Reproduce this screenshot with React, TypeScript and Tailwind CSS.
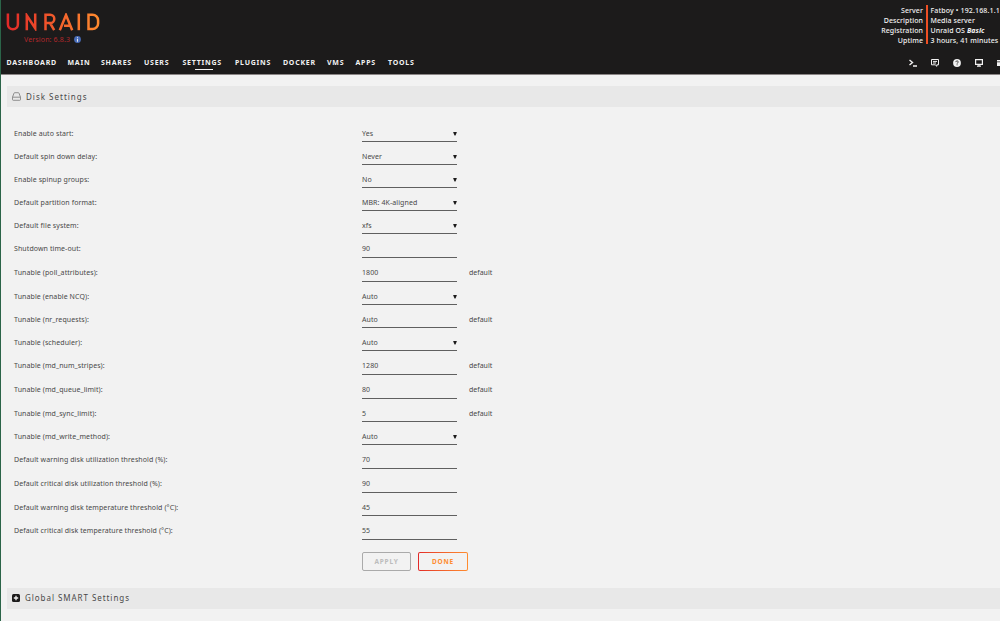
import clsx from "clsx";

interface Setting {
  label: string;
  value: string;
  type: "select" | "text";
  height: string;
  hint?: string;
}

const menu = [
  { name: "DASHBOARD", width: "w-[61px]" },
  { name: "MAIN", width: "w-[33.5px]" },
  { name: "SHARES", width: "w-[43px]" },
  { name: "USERS", width: "w-[38.5px]" },
  { name: "SETTINGS", width: "w-[52.5px]" },
  { name: "PLUGINS", width: "w-[48px]" },
  { name: "DOCKER", width: "w-[44px]" },
  { name: "VMS", width: "w-[28.5px]" },
  { name: "APPS", width: "w-[32.5px]" },
  { name: "TOOLS", width: "w-[30px]" },
];

const settings: Setting[] = [
  { label: "Enable auto start:", value: "Yes", type: "select", height: "h-[23px]" },
  { label: "Default spin down delay:", value: "Never", type: "select", height: "h-[23px]" },
  { label: "Enable spinup groups:", value: "No", type: "select", height: "h-[23px]" },
  { label: "Default partition format:", value: "MBR: 4K-aligned", type: "select", height: "h-[23px]" },
  { label: "Default file system:", value: "xfs", type: "select", height: "h-[23px]" },
  { label: "Shutdown time-out:", value: "90", type: "text", height: "h-[24px]" },
  { label: "Tunable (poll_attributes):", value: "1800", type: "text", height: "h-[24px]", hint: "default" },
  { label: "Tunable (enable NCQ):", value: "Auto", type: "select", height: "h-[23px]" },
  { label: "Tunable (nr_requests):", value: "Auto", type: "text", height: "h-[23px]", hint: "default" },
  { label: "Tunable (scheduler):", value: "Auto", type: "select", height: "h-[23px]" },
  { label: "Tunable (md_num_stripes):", value: "1280", type: "text", height: "h-[24px]", hint: "default" },
  { label: "Tunable (md_queue_limit):", value: "80", type: "text", height: "h-[24px]", hint: "default" },
  { label: "Tunable (md_sync_limit):", value: "5", type: "text", height: "h-[23px]", hint: "default" },
  { label: "Tunable (md_write_method):", value: "Auto", type: "select", height: "h-[23px]" },
  { label: "Default warning disk utilization threshold (%):", value: "70", type: "text", height: "h-[24px]" },
  { label: "Default critical disk utilization threshold (%):", value: "90", type: "text", height: "h-[24px]" },
  { label: "Default warning disk temperature threshold (°C):", value: "45", type: "text", height: "h-[23px]" },
  { label: "Default critical disk temperature threshold (°C):", value: "55", type: "text", height: "h-[24px]" },
];

function Logo() {
  return (
    <svg width="94" height="18" viewBox="0 0 94 18" fill="none" stroke="url(#brand)" strokeWidth="2.5">
      <defs>
        <linearGradient id="brand" gradientUnits="userSpaceOnUse" x1="0" y1="0" x2="94" y2="0">
          <stop offset="0" stopColor="#e22828" />
          <stop offset="1" stopColor="#ff8c2f" />
        </linearGradient>
      </defs>
      <path d="M1.900.6v10.700a5 5 0 0 0 10 0V.6" />
      <path d="M20.800 17.200V2.500l8.400 12.800V.6" />
      <path d="M39.500 17.200V1.800h4.700a3.900 3.900 0 0 1 0 8.200h-4.700M44 10l4.200 7.200" />
      <path d="M53.800 17.200L60 2l6.200 15.200M58 12.800h6.500" />
      <path d="M72.800.6v16.600" />
      <path d="M82.500 1.800V16h4a5.600 5.600 0 0 0 5.600-5.600V7.400a5.600 5.600 0 0 0-5.600-5.600z" />
    </svg>
  );
}

function Header() {
  return (
    <header className="h-[75px] bg-[#1c1b1b] border-b border-[#8a8585] text-[#f2f2f2] overflow-hidden">
      <div className="flex justify-between h-[52px]">
        <div className="pl-[5px] pt-[13px]">
          <Logo />
          <div className="flex items-center gap-[3.500px] mt-[3px] pl-[18px] h-[10px] text-[7px] leading-[11px] text-[#b3282b]">
            <span className="tracking-[0.14px] pt-px">Version: 6.8.3</span>
            <svg width="7" height="7" viewBox="0 0 7 7">
              <circle cx="3.500" cy="3.500" r="3.400" fill="#486dba" />
              <path d="M3.500 1.200v1.100M3.500 3v2.700" stroke="#e6e6e6" strokeWidth="1.100" />
            </svg>
          </div>
        </div>
        <div className="flex pt-[5px] text-[7px] leading-[10px] whitespace-nowrap font-medium tracking-[0.08px]">
          <div className="text-right pr-[3px] pt-px">
            <div>Server</div>
            <div>Description</div>
            <div>Registration</div>
            <div>Uptime</div>
          </div>
          <div className="w-[74px] h-[39px] border-l-2 border-[#ef4f24] pl-[2.500px] pt-px">
            <div className="tracking-[0.14px]">Fatboy • 192.168.1.1</div>
            <div>Media server</div>
            <div>Unraid OS <b><i>Basic</i></b></div>
            <div>3 hours, 41 minutes</div>
          </div>
        </div>
      </div>
      <nav className="flex justify-between pl-[5.500px]">
        <ul className="flex text-[7px] leading-[10px] font-bold tracking-[0.75px] pt-[6px]">
          {menu.map((m) => (
            <li key={m.name} className={clsx("flex flex-col", m.width)}>
              {m.name}
              {m.name === "SETTINGS" && <span className="ml-[12px] mt-px w-[18px] h-px bg-[#f2f2f2]" />}
            </li>
          ))}
        </ul>
        <div className="flex items-center gap-[14px] h-[22px] w-[91px] shrink-0 overflow-hidden">
          <svg className="shrink-0" width="8" height="8" viewBox="0 0 8 8" fill="none" stroke="#f2f2f2" strokeWidth="1.400">
            <path d="M.5 1l3 2.500-3 2.500M4 7h4" />
          </svg>
          <svg className="shrink-0" width="8" height="8" viewBox="0 0 8 8" fill="none" stroke="#f2f2f2">
            <path d="M.5.5h7v5.300H5.800v1.500L4.200 5.800H.5zM2 2.400h4M2 4h3" />
          </svg>
          <svg className="shrink-0" width="8" height="8" viewBox="0 0 8 8">
            <circle cx="4" cy="4" r="3.900" fill="#f2f2f2" />
            <path d="M2.800 3.100c0-1.600 2.500-1.500 2.500-.1 0 .8-1.200.8-1.200 1.700M4.100 5.300v1" fill="none" stroke="#1c1b1b" strokeWidth=".8" />
          </svg>
          <svg className="shrink-0" width="8" height="8" viewBox="0 0 8 8" fill="none" stroke="#f2f2f2">
            <path d="M.6.6h6.800v4.800H.6zM2 7.100h4M4 5.400v1.700" strokeWidth="1.200" />
          </svg>
          <svg className="shrink-0" width="8" height="8" viewBox="0 0 8 8">
            <path d="M0 1h8v1.500H0zM0 3.200h8V7H0z" fill="#f2f2f2" />
          </svg>
        </div>
      </nav>
    </header>
  );
}

function Row({ setting }: { setting: Setting }) {
  const tall = setting.height === "h-[24px]";
  return (
    <div className={clsx("flex items-end", setting.height)}>
      <label className={clsx("w-[348px] leading-[10px]", tall ? "h-[14px]" : "h-[13px]")}>
        {setting.label}
      </label>
      <div className={clsx("flex justify-between w-[95px] leading-[11px] border-b border-[#606060]", tall ? "h-[15px]" : "h-[14px]")}>
        <span>{setting.value}</span>
        {setting.type === "select" && (
          <svg className="mt-[3px]" width="4" height="5" viewBox="0 0 4 5">
            <path d="M.1 1h3.800L2.500 4.500h-1z" fill="#1c1b1b" />
          </svg>
        )}
      </div>
      {setting.hint && (
        <span className={clsx("pl-[12px] leading-[11px] tracking-normal", tall ? "h-[15px]" : "h-[14px]")}>{setting.hint}</span>
      )}
    </div>
  );
}

function App() {
  return (
    <div className="w-[1000px] h-[621px] overflow-hidden border-l border-[#2b6448] bg-[#f2f2f2] text-[#484848] font-['Noto_Sans','Open_Sans',sans-serif] whitespace-nowrap">
      <Header />
      <div className="flex items-center gap-[5px] ml-[6px] mt-[11px] pl-[5px] h-[21px] bg-[#e8e8e8] text-[8px] tracking-[1px]">
        <svg className="mb-px" width="9" height="9" viewBox="0 0 9 9" fill="none" stroke="#777" strokeWidth=".8">
          <path d="M.5 5.200L2 1.200q.2-.5.700-.5h3.600q.5 0 .7.500L8.500 5.200v2.300q0 .8-.8.800H1.300q-.8 0-.8-.8zM.5 5.200h8" />
        </svg>
        <span>Disk Settings</span>
      </div>
      <form className="pl-[13px] pt-[12px] text-[7px] tracking-[0.09px]">
        {settings.map((s) => (
          <Row key={s.label} setting={s} />
        ))}
        <div className="flex gap-[7px] pl-[348px] pt-[12px] text-[6.500px] font-bold tracking-[0.8px]">
          <button type="button" className="w-[49px] h-[19px] rounded-[2px] border border-[#aaa] text-[#bcbcbc]">APPLY</button>
          <button type="button" className="w-[50px] h-[19px] rounded-[2px] p-px bg-linear-to-r from-[#e22828] to-[#ff8c2f] text-[#ff8c2f]">
            <span className="flex items-center justify-center h-full rounded-[1px] bg-[#f2f2f2]">DONE</span>
          </button>
        </div>
      </form>
      <div className="flex items-center gap-[5px] ml-[6px] mt-[17px] pl-[5px] h-[21px] bg-[#e8e8e8] text-[8px] leading-[10px] tracking-[0.95px]">
        <svg className="mb-px" width="8" height="8" viewBox="0 0 8 8">
          <rect width="8" height="8" rx="1.500" fill="#1c1b1b" />
          <path d="M4 1.800v4.400M1.800 4h4.400" stroke="#f2f2f2" strokeWidth="1.300" />
        </svg>
        <span className="pb-px">Global SMART Settings</span>
      </div>
    </div>
  );
}

export default App;
